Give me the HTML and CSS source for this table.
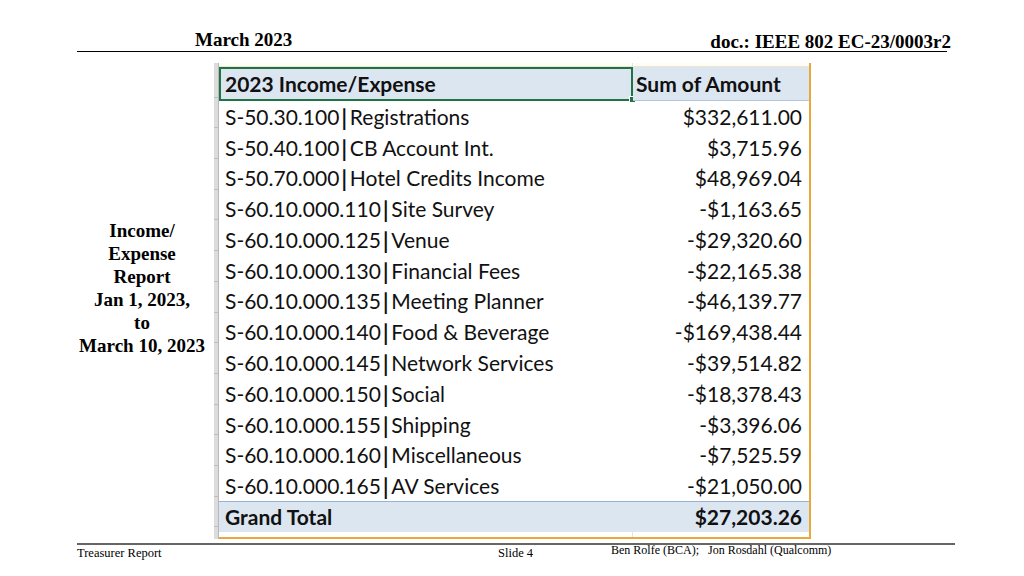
FILE: index.html
```html
<!DOCTYPE html>
<html>
<head>
<meta charset="utf-8">
<link rel="stylesheet" href="styles.css">
</head>
<body>
<div class="slide">
  <header class="hdr">
    <span class="hdr-date">March 2023</span>
    <span class="hdr-doc">doc.: IEEE 802 EC-23/0003r2</span>
  </header>
  <main class="content">
    <div class="label">Income/<br>Expense<br>Report<br>Jan 1, 2023,<br>to<br>March 10, 2023</div>
    <div class="sheet">
      <div class="rowhdr"></div>
      <div class="grid-wrap">
        <div class="topstrip"><span class="colA"></span><span class="colB"></span></div>
        <div class="tbl">
          <div class="cell head a sel">2023 Income/Expense<span class="handle"></span></div>
          <div class="cell head b">Sum of Amount</div>

          <div class="cell a">S-50.30.100<span class="pipe">|</span>Registrations</div><div class="cell b">$332,611.00</div>
          <div class="cell a">S-50.40.100<span class="pipe">|</span>CB Account Int.</div><div class="cell b">$3,715.96</div>
          <div class="cell a">S-50.70.000<span class="pipe">|</span>Hotel Credits Income</div><div class="cell b">$48,969.04</div>
          <div class="cell a">S-60.10.000.110<span class="pipe">|</span>Site Survey</div><div class="cell b">-$1,163.65</div>
          <div class="cell a">S-60.10.000.125<span class="pipe">|</span>Venue</div><div class="cell b">-$29,320.60</div>
          <div class="cell a">S-60.10.000.130<span class="pipe">|</span>Financial Fees</div><div class="cell b">-$22,165.38</div>
          <div class="cell a">S-60.10.000.135<span class="pipe">|</span>Meeting Planner</div><div class="cell b">-$46,139.77</div>
          <div class="cell a">S-60.10.000.140<span class="pipe">|</span>Food &amp; Beverage</div><div class="cell b">-$169,438.44</div>
          <div class="cell a">S-60.10.000.145<span class="pipe">|</span>Network Services</div><div class="cell b">-$39,514.82</div>
          <div class="cell a">S-60.10.000.150<span class="pipe">|</span>Social</div><div class="cell b">-$18,378.43</div>
          <div class="cell a">S-60.10.000.155<span class="pipe">|</span>Shipping</div><div class="cell b">-$3,396.06</div>
          <div class="cell a">S-60.10.000.160<span class="pipe">|</span>Miscellaneous</div><div class="cell b">-$7,525.59</div>
          <div class="cell a">S-60.10.000.165<span class="pipe">|</span>AV Services</div><div class="cell b">-$21,050.00</div>

          <div class="cell total a">Grand Total</div>
          <div class="cell total b">$27,203.26</div>
        </div>
        <div class="botstrip"><span class="colA"></span><span class="colB"></span></div>
      </div>
    </div>
  </main>
  <footer class="ftr">
    <span class="ftr-left">Treasurer Report</span>
    <span class="ftr-mid">Slide 4</span>
    <span class="ftr-right">Ben Rolfe (BCA);&nbsp;&nbsp; Jon Rosdahl (Qualcomm)</span>
  </footer>
</div>
</body>
</html>
```
FILE: styles.css
```css
html, body {
  margin: 0;
  padding: 0;
  background: #ffffff;
}
.slide {
  width: 1024px;
  height: 576px;
  display: flex;
  flex-direction: column;
  font-family: "Liberation Serif", "Times New Roman", serif;
  color: #000;
  overflow: hidden;
}
.hdr {
  height: 52px;
  margin: 0 77px 0 77px;
  border-bottom: 1px solid #000;
  display: flex;
  align-items: flex-end;
  font-weight: bold;
  font-size: 19px;
  line-height: 19px;
  box-sizing: border-box;
}
.hdr-date {
  margin-left: 118px;
  padding-bottom: 2px;
}
.hdr-doc {
  margin-left: auto;
  margin-right: -4px;
  padding-bottom: 0;
}
.content {
  flex: 1;
  display: flex;
  align-items: flex-start;
}
.label {
  width: 144px;
  margin-left: 70px;
  margin-top: 167px;
  text-align: center;
  font-weight: bold;
  font-size: 19px;
  line-height: 23px;
}
.sheet {
  margin-top: 11px;
  display: flex;
  height: 476px;
}
.rowhdr {
  width: 4px;
  background: #dcdcdc;
  border-right: 1px solid #b8b8b8;
  background-image: repeating-linear-gradient(to bottom, transparent 0, transparent 29.7px, #bdbdbd 29.7px, #bdbdbd 30.7px);
  background-position: 0 4px;
}
.grid-wrap {
  display: flex;
  flex-direction: column;
  border-right: 2px solid #e8a83a;
  border-bottom: 2px solid #e8a83a;
}
.topstrip, .botstrip {
  display: flex;
  height: 3px;
  background: #fffdf4;
  border-bottom: 1px solid #ece6d4;
}
.botstrip {
  height: 5px;
  background: #fff;
  border-bottom: none;
}
.topstrip .colA, .botstrip .colA {
  width: 413px;
  border-right: 1px solid #e3e3e3;
}
.topstrip .colB, .botstrip .colB {
  width: 176px;
}
.tbl {
  display: grid;
  grid-template-columns: 414px 176px;
  grid-template-rows: 34px repeat(13, 30.77px) 31px;
  font-family: "Lato", "Liberation Sans", sans-serif;
  font-size: 21px;
  color: #111;
}
.cell {
  display: flex;
  align-items: center;
  white-space: nowrap;
  position: relative;
}
.pipe {
  margin: 0 3px 0 2px;
  font-weight: bold;
  transform: scaleY(1.1);
}
.cell.a {
  padding-left: 6px;
}
.cell.b {
  justify-content: flex-end;
  padding-right: 7px;
}
.head {
  background: #dce6f1;
  font-weight: bold;
  border-bottom: 1px solid #b3c6e0;
}
.head.b {
  justify-content: flex-start;
  padding-left: 3px;
}
.sel {
  outline: 2px solid #217346;
  outline-offset: -2px;
}
.handle {
  position: absolute;
  right: -3px;
  bottom: -3px;
  width: 5px;
  height: 5px;
  background: #217346;
  border: 1px solid #fff;
}
.total {
  background: #dce6f1;
  font-weight: bold;
  border-top: 1px solid #95b3d7;
}
.ftr {
  height: 33px;
  margin: 0 69px 0 77px;
  border-top: 2px solid #666;
  display: grid;
  grid-template-columns: 421px 113px auto;
  font-size: 12.5px;
  box-sizing: border-box;
}
.ftr-left, .ftr-mid {
  padding-top: 1px;
}
.ftr-right {
  font-size: 12px;
  margin-top: -2px;
}
```
